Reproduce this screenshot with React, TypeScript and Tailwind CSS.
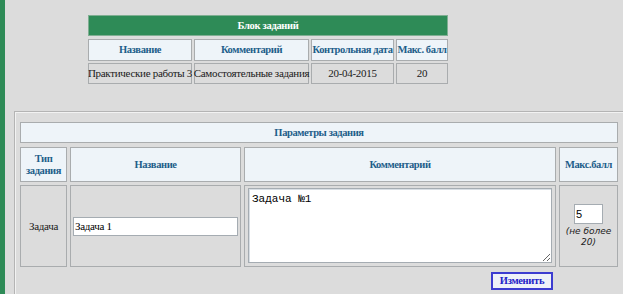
import React from "react";

const hdr =
  "bg-[#eef4f9] border border-[#a9acae] text-[#1d5e8a] font-bold text-[10.5px] tracking-[-0.4px] flex items-center justify-center text-center leading-[12px]";
const cell =
  "bg-[#dcdcdc] border border-[#a9acae] text-[#1a1a1a] text-[11px] tracking-[-0.3px] flex items-center justify-center text-center whitespace-nowrap";

export default function App() {
  return (
    <div className="w-[623px] h-[294px] flex bg-[#dcdcdc] overflow-hidden font-['Liberation_Serif','Times_New_Roman',serif]">
      <div className="w-[5px] h-full bg-[#2e8b57] shrink-0" />
      <div className="flex-1 flex flex-col">
        <div className="ml-[83px] mt-[15px] grid grid-cols-[104px_115px_83px_52px] gap-x-[2px] w-[360px]">
          <div className="col-span-4 h-[21px] bg-[#2e8b57] border border-[#7fae92] text-white font-bold text-[10.5px] tracking-[-0.3px] flex items-center justify-center">
            Блок заданий
          </div>
          <div className={hdr + " h-[22px] mt-[3px]"}>Название</div>
          <div className={hdr + " h-[22px] mt-[3px]"}>Комментарий</div>
          <div className={hdr + " h-[22px] mt-[3px] whitespace-nowrap"}>Контрольная дата</div>
          <div className={hdr + " h-[22px] mt-[3px] whitespace-nowrap"}>Макс. балл</div>
          <div className={cell + " h-[21px] mt-[2px]"}>Практические работы 3</div>
          <div className={cell + " h-[21px] mt-[2px]"}>Самостоятельные задания</div>
          <div className={cell + " h-[21px] mt-[2px]"}>20-04-2015</div>
          <div className={cell + " h-[21px] mt-[2px]"}>20</div>
        </div>
        <div className="ml-[9px] mt-[27px] flex-1 border-t border-l border-[#b4b4b4] shadow-[inset_1px_1px_0_#f2f2f2] pl-[5px] pt-[10px] flex flex-col">
          <div className="grid grid-cols-[47px_171px_312px_59px] gap-x-[3px] w-[598px]">
            <div className={hdr + " col-span-4 h-[21px]"}>Параметры задания</div>
            <div className={hdr + " h-[35px] mt-[4px]"}>
              Тип
              <br />
              задания
            </div>
            <div className={hdr + " h-[35px] mt-[4px]"}>Название</div>
            <div className={hdr + " h-[35px] mt-[4px]"}>Комментарий</div>
            <div className={hdr + " h-[35px] mt-[4px] whitespace-nowrap"}>Макс.балл</div>
            <div className={cell + " h-[82px] mt-[3px]"}>Задача</div>
            <div className={cell + " h-[82px] mt-[3px] justify-start pl-[2px]"}>
              <input
                type="text"
                defaultValue="Задача 1"
                className="w-[165px] h-[19px] bg-white border border-[#a5acb2] text-[11px] tracking-[-0.3px] px-[1px] text-black outline-none font-['Liberation_Serif',serif]"
              />
            </div>
            <div className={cell + " h-[82px] mt-[3px] justify-start items-start pl-[3px] pt-[2px]"}>
              <textarea
                defaultValue="Задача №1"
                className="w-[304px] h-[75px] bg-white border border-[#a5acb2] shadow-[inset_1px_1px_0_#d8dee4] text-[11px] tracking-normal px-[3px] py-[2px] text-black outline-none resize font-['Liberation_Mono','Courier_New',monospace]"
              />
            </div>
            <div className={cell + " h-[82px] mt-[3px] flex-col whitespace-normal tracking-normal"}>
              <input
                type="text"
                defaultValue="5"
                className="w-[29px] h-[20px] bg-white border border-[#a5acb2] text-[11px] px-[1px] text-black outline-none font-['Liberation_Sans',Arial,sans-serif]"
              />
              <div className="text-[9px] italic leading-[11px] mt-[2px] text-[#222] font-['DejaVu_Sans',Verdana,sans-serif]">
                (не более
                <br />
                20)
              </div>
            </div>
          </div>
          <div className="flex w-[598px] justify-end pr-[65px] mt-[5px]">
            <button className="w-[62px] h-[18px] bg-[#eef1f8] border-2 border-[#3c3cd0] text-[#2222c8] font-bold text-[10.5px] tracking-[-0.3px] flex items-center justify-center font-['Liberation_Serif',serif]">
              Изменить
            </button>
          </div>
        </div>
      </div>
    </div>
  );
}
